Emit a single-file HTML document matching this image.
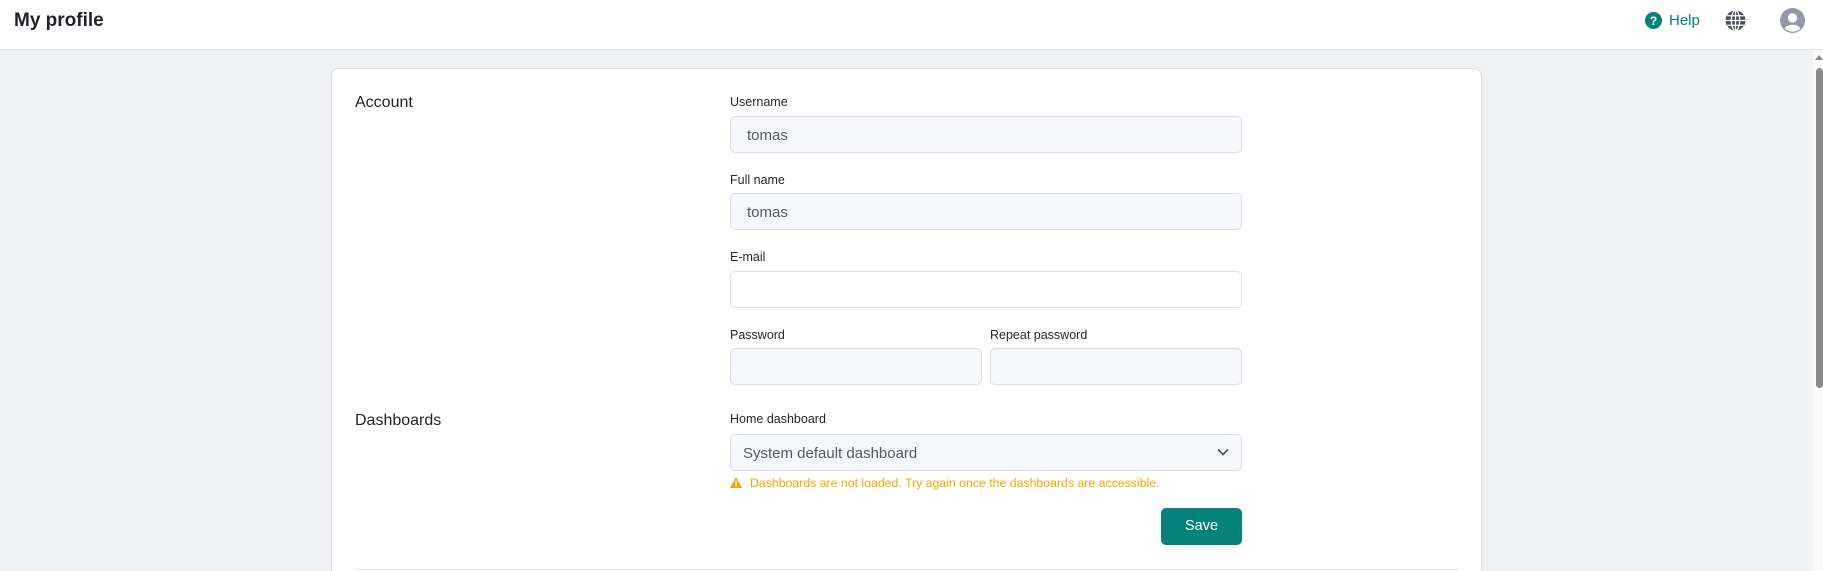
<!DOCTYPE html>
<html><head><meta charset="utf-8"><style>
*{box-sizing:border-box;margin:0;padding:0}
html{overflow:hidden;width:1823px;height:571px}
body{width:1823px;height:571px;overflow:hidden;background:#f0f1f3;font-family:"Liberation Sans",sans-serif;color:#24292e;position:relative}
.hdr{position:absolute;left:0;top:0;width:1823px;height:50px;background:#fff;border-bottom:1px solid #dcdde3}
.title{position:absolute;left:14px;top:10px;font-size:19px;font-weight:bold;color:#1f2328}
.card{position:absolute;left:331px;top:68px;width:1151px;height:503px;background:#fff;border:1px solid #dcdee3;border-bottom:none;border-radius:8px 8px 0 0}
.sec{position:absolute;left:355px;font-size:16px;color:#1f2328}
.lbl{position:absolute;font-size:12.5px;color:#24292e}
.inp{position:absolute;height:37px;background:#f6f7fb;border:1px solid #dcdee4;border-radius:5px;font-size:15px;color:#555b66;padding:10px 0 0 16px}
.inp.w{background:#fff}
.warn{position:absolute;left:730px;top:476px;font-size:12.3px;color:#f0a800}
.save{position:absolute;left:1161px;top:508px;width:81px;height:37px;background:#05827a;border-radius:5px;color:#fff;font-size:14.5px;text-align:center;line-height:37px}
.line{position:absolute;left:355px;top:569px;width:1103px;height:1px;background:#e1e2e6}
.sb{position:absolute;left:1813px;top:50px;width:10px;height:521px;background:#fafafa}
.thumb{position:absolute;left:1816px;top:68px;width:7px;height:320px;background:#8a8a8a;border-radius:4px}
</style></head><body>
<div class="hdr">
<div class="title">My profile</div>
<svg style="position:absolute;left:1645px;top:12px" width="17" height="17" viewBox="0 0 17 17"><circle cx="8.5" cy="8.5" r="8.5" fill="#05827a"/><text x="8.5" y="13" font-size="12" font-weight="bold" fill="#fff" text-anchor="middle" font-family="Liberation Sans">?</text></svg>
<div style="position:absolute;left:1669px;top:12px;font-size:15px;color:#05827a">Help</div>
<svg style="position:absolute;left:1725px;top:10px" width="21" height="21" viewBox="0 0 20 20"><circle cx="10" cy="10" r="9.5" fill="#4a4f5c"/><g stroke="#fff" stroke-width="1.2" fill="none"><ellipse cx="10" cy="10" rx="4" ry="9.5"/><line x1="10" y1="0.5" x2="10" y2="19.5"/><line x1="0.5" y1="10" x2="19.5" y2="10"/><line x1="2" y1="5.5" x2="18" y2="5.5"/><line x1="2" y1="14.5" x2="18" y2="14.5"/></g></svg>
<svg style="position:absolute;left:1780px;top:8px" width="25" height="25" viewBox="0 0 24 24"><circle cx="12" cy="12" r="12" fill="#9398a6"/><circle cx="12" cy="9.5" r="4.5" fill="#fff"/><path d="M4.5 20 C6 15 18 15 19.5 20 A12 12 0 0 1 4.5 20Z" fill="#fff"/></svg>
</div>
<div class="card"></div>
<div class="sec" style="top:94px">Account</div>
<div class="lbl" style="left:730px;top:95px">Username</div>
<div class="inp" style="left:730px;top:116px;width:512px">tomas</div>
<div class="lbl" style="left:730px;top:173px">Full name</div>
<div class="inp" style="left:730px;top:193px;width:512px">tomas</div>
<div class="lbl" style="left:730px;top:250px">E-mail</div>
<div class="inp w" style="left:730px;top:271px;width:512px"></div>
<div class="lbl" style="left:730px;top:328px">Password</div>
<div class="inp" style="left:730px;top:348px;width:252px"></div>
<div class="lbl" style="left:990px;top:328px">Repeat password</div>
<div class="inp" style="left:990px;top:348px;width:252px"></div>
<div class="sec" style="top:412px">Dashboards</div>
<div class="lbl" style="left:730px;top:412px">Home dashboard</div>
<div class="inp" style="left:730px;top:434px;width:512px;padding-left:12px">System default dashboard
<svg style="position:absolute;right:12px;top:13px" width="12" height="8" viewBox="0 0 12 8"><path d="M1 1.5L6 6.5L11 1.5" stroke="#555b66" stroke-width="1.8" fill="none"/></svg></div>
<div class="warn"><svg width="12" height="11" viewBox="0 0 12 11" style="vertical-align:-1px;margin-right:8px"><path d="M6 0L12 11H0Z" fill="#f0a800"/><rect x="5.3" y="3.5" width="1.4" height="4" fill="#fff"/><rect x="5.3" y="8.3" width="1.4" height="1.4" fill="#fff"/></svg>Dashboards are not loaded. Try again once the dashboards are accessible.</div>
<div class="save">Save</div>
<div class="line"></div>
<div class="sb"></div>
<svg style="position:absolute;left:1815px;top:55px" width="8" height="5"><path d="M0 5L4 0L8 5Z" fill="#8a8a8a"/></svg>
<div class="thumb"></div>
</body></html>
